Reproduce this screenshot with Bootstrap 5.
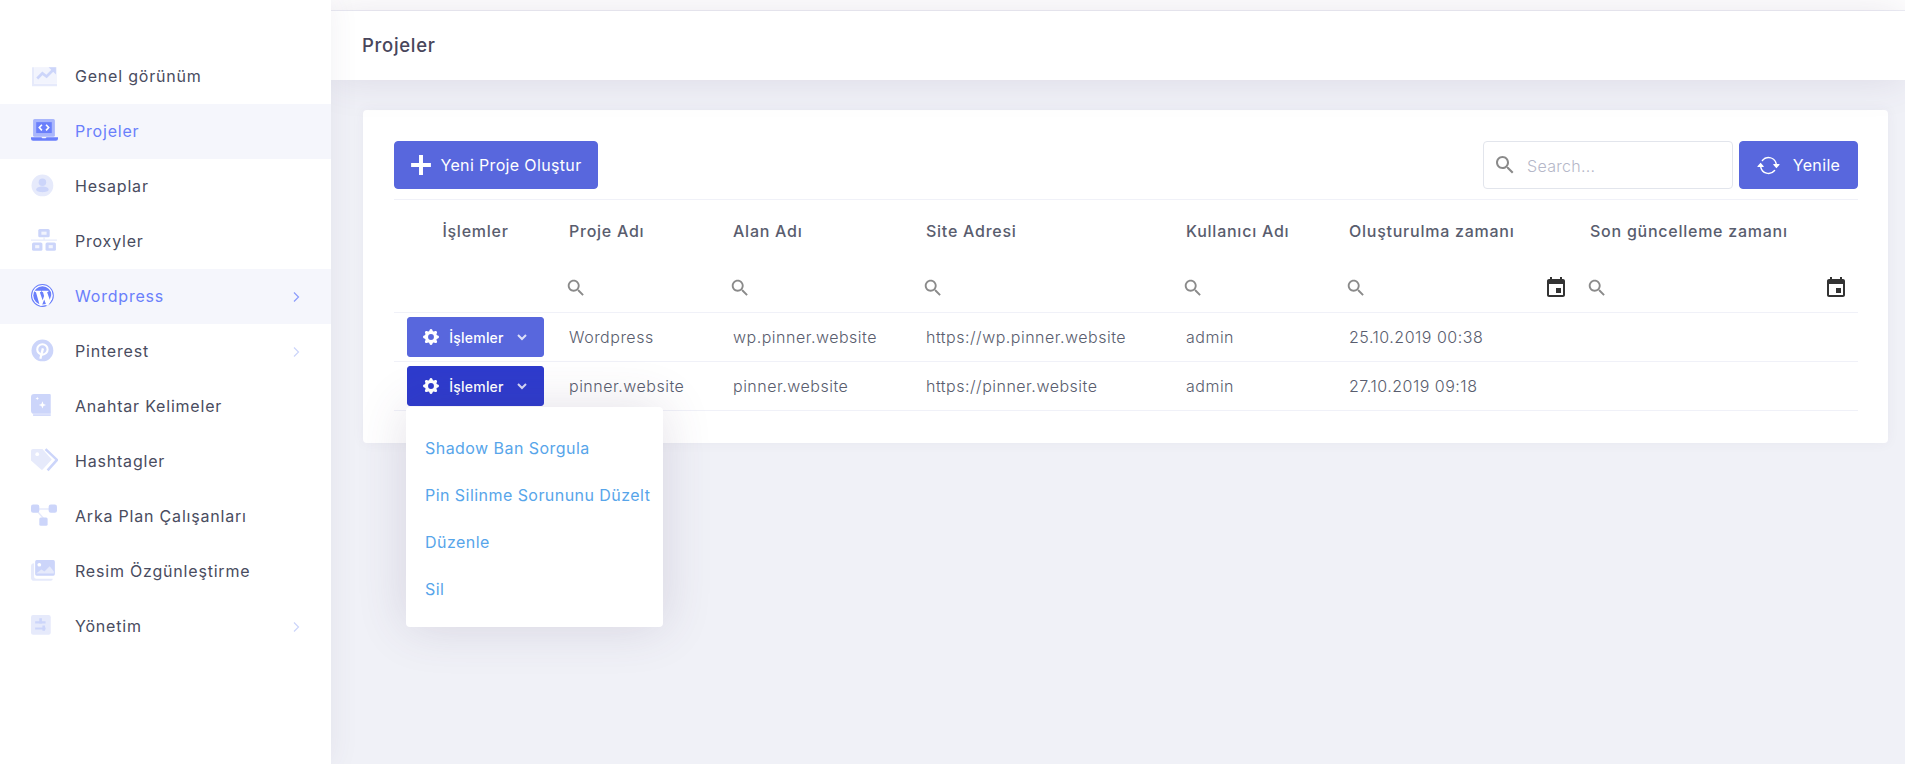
<!DOCTYPE html>
<html lang="tr">
<head>
    <meta charset="UTF-8">
    <meta name="viewport" content="width=device-width, initial-scale=1.0">
    <title>Projeler</title>
    <link href="https://cdn.jsdelivr.net/npm/bootstrap@5.3.0/dist/css/bootstrap.min.css" rel="stylesheet">
    <style>
        body {
            font-family: "Inter", "Noto Sans", sans-serif;
            font-size: 16px;
            letter-spacing: .5px;
            color: #494c60;
            background: #f0f1f7;
            height: 764px;
            overflow: hidden;
        }
        .page-wrap { height: 764px; }

        /* sidebar */
        .side-bar {
            width: 331px;
            flex: 0 0 331px;
            background: #fff;
            padding-top: 49px;
            box-shadow: 0 0 28px rgba(82, 63, 105, .08);
            position: relative;
            z-index: 3;
        }
        .side-item {
            height: 55px;
            padding: 0 31px;
            color: #494c60;
            text-decoration: none;
            font-size: 16px;
            letter-spacing: .8px;
        }
        .side-item span { padding-bottom: 2px; }
        .side-item svg.side-icon { width: 27px; height: 27px; flex: none; margin-right: 17px; }
        .side-item.is-open { background: #f5f6fc; color: #6a7ffb; }
        .side-arrow { margin-left: auto; width: 8px; height: 12px; flex: none; }

        /* top header */
        .top-strip { height: 11px; background: #fff; border-bottom: 1px solid #eeeff6; }
        .top-head {
            height: 69px;
            background: #fff;
            padding-left: 31px;
            font-size: 18.5px;
            letter-spacing: .7px;
            font-weight: 500;
            color: #48465b;
            box-shadow: 0 0 40px rgba(82, 63, 105, .13);
            position: relative;
            z-index: 2;
        }

        /* content card */
        .page-body { padding: 30px 17px 0 32px; }
        .main-card {
            border: 0;
            border-radius: 4px;
            padding: 31px 30px 32px 31px;
            box-shadow: 0 0 13px rgba(82, 63, 105, .05);
        }
        .tool-row { height: 48px; margin-bottom: 10px; }
        .act-btn {
            --bs-btn-bg: #5867dd;
            --bs-btn-border-color: #5867dd;
            --bs-btn-hover-bg: #5867dd;
            --bs-btn-hover-border-color: #5867dd;
            --bs-btn-font-size: 16px;
            letter-spacing: .35px;
            height: 48px;
            border-radius: 4px;
        }
        .new-btn { width: 204px; }
        .new-btn svg { width: 22px; height: 22px; margin-right: 8px; flex: none; }
        .refresh-btn { width: 119px; margin-left: 6px; }
        .refresh-btn svg { width: 23px; height: 23px; margin-right: 13px; flex: none; }
        .search-box {
            width: 250px;
            height: 48px;
            border: 1px solid #e2e5ec;
            border-radius: 4px;
            padding: 0 9px;
        }
        .search-box svg { width: 24px; height: 24px; flex: none; color: #8a8a8a; }
        .search-box input {
            border: 0;
            outline: 0;
            width: 100%;
            margin-left: 8px;
            padding-top: 2px;
            font-size: 16px;
            letter-spacing: .3px;
            font-weight: 300;
            color: #494c60;
            min-width: 0;
        }
        .search-box input::placeholder { color: #b5b7c8; }

        /* table */
        .proj-table { table-layout: fixed; margin: 0; width: 1464px; border-top: 1px solid #f0f1f8; color: #494c60; }
        .proj-table th, .proj-table td { border-color: #f0f1f8; vertical-align: middle; padding: 0 12px; white-space: nowrap; }
        .proj-table th { font-weight: 500; font-size: 16px; letter-spacing: .75px; color: #595d6e; }
        .head-row { height: 63px; }
        .head-row th { border-bottom: 0; }
        .filter-row { height: 50px; }
        .filter-row th { padding-left: 8px; padding-right: 10px; padding-top: 1px; }
        .filter-row svg { width: 22px; height: 22px; flex: none; color: #8a8a8a; }
        .filter-row svg.cal-icon { width: 24px; height: 24px; color: #333; }
        .filter-row input { border: 0; outline: 0; background: none; flex: 1 1 auto; min-width: 0; }
        .data-row { height: 49px; }
        .data-row td { font-weight: 300; color: #595d6e; font-size: 16px; letter-spacing: .5px; }
        .w-a { width: 163px; } .w-b { width: 164px; } .w-c { width: 193px; } .w-d { width: 260px; }
        .w-e { width: 163px; } .w-f { width: 241px; } .w-g { width: 280px; }

        .proj-table td.act-cell { position: relative; padding-left: 13px; }
        .row-btn {
            --bs-btn-bg: #5867dd;
            --bs-btn-border-color: #5867dd;
            --bs-btn-font-size: 14px;
            --bs-btn-padding-x: 0;
            --bs-btn-padding-y: 0;
            letter-spacing: .2px;
            width: 137px;
            height: 40px;
            border-radius: 3px;
            font-weight: 500;
        }
        .row-btn.is-on { background: #2e3bcd; border-color: #2e3bcd; }
        .row-btn .gear { width: 16px; height: 16px; margin-right: 10px; flex: none; }
        .row-btn .chev { width: 12px; height: 12px; margin-left: 12px; opacity: .8; flex: none; }

        .row-menu {
            display: block;
            top: 45px;
            left: 12px;
            width: 257px;
            height: 220px;
            padding: 17px 0 0;
            border: 0;
            border-radius: 4px;
            box-shadow: 0 0 50px rgba(82, 63, 105, .16);
        }
        .row-menu .dropdown-item {
            color: #57a5ea;
            height: 47px;
            padding: 0 19px;
            font-size: 16px;
            letter-spacing: .45px;
            display: flex;
            align-items: center;
        }
    </style>
</head>
<body>
    <div class="d-flex page-wrap">
        <nav class="side-bar" id="sideBar"></nav>

        <div class="flex-grow-1">
            <div class="top-strip"></div>
            <div class="top-head d-flex align-items-center">Projeler</div>

            <div class="page-body">
                <div class="card main-card">
                    <div class="tool-row d-flex align-items-center justify-content-between">
                        <a href="#" class="btn btn-primary act-btn new-btn d-flex align-items-center justify-content-center">
                            <svg viewBox="0 0 20 20"><path d="M8.200 1h3.600v7.200H19v3.600h-7.200V19H8.200v-7.200H1V8.200h7.200z" fill="#fff"/></svg>
                            Yeni Proje Oluştur
                        </a>
                        <div class="d-flex align-items-center">
                            <div class="search-box d-flex align-items-center">
                                <svg viewBox="0 0 24 24" fill="currentColor"><path d="M15.5 14h-.79l-.28-.27C15.41 12.59 16 11.11 16 9.5 16 5.91 13.09 3 9.5 3S3 5.91 3 9.5 5.91 16 9.5 16c1.61 0 3.09-.59 4.23-1.57l.27.28v.79l5 4.99L20.49 19l-4.99-5zm-6 0C7.01 14 5 11.99 5 9.5S7.01 5 9.5 5 14 7.01 14 9.5 11.99 14 9.5 14z"/></svg>
                                <input type="text" placeholder="Search...">
                            </div>
                            <a href="#" class="btn btn-primary act-btn refresh-btn d-flex align-items-center justify-content-center">
                                <svg viewBox="0 0 16 16" fill="#fff"><path d="M11.534 7h3.932a.25.25 0 0 1 .192.41l-1.966 2.36a.25.25 0 0 1-.384 0l-1.966-2.36a.25.25 0 0 1 .192-.41zm-11 2h3.932a.25.25 0 0 0 .192-.41L2.692 6.23a.25.25 0 0 0-.384 0L.342 8.59A.25.25 0 0 0 .534 9z"/><path d="M8 3c-1.552 0-2.94.707-3.857 1.818a.5.5 0 1 1-.771-.636A6.002 6.002 0 0 1 13.917 7H12.9A5.002 5.002 0 0 0 8 3zM3.1 9a5.002 5.002 0 0 0 8.757 2.182.5.5 0 1 1 .771.636A6.002 6.002 0 0 1 2.083 9H3.1z"/></svg>
                                Yenile
                            </a>
                        </div>
                    </div>

                    <table class="table proj-table">
                        <colgroup>
                            <col class="w-a"><col class="w-b"><col class="w-c"><col class="w-d"><col class="w-e"><col class="w-f"><col class="w-g">
                        </colgroup>
                        <thead>
                            <tr class="head-row">
                                <th class="text-center">İşlemler</th>
                                <th>Proje Adı</th>
                                <th>Alan Adı</th>
                                <th>Site Adresi</th>
                                <th>Kullanıcı Adı</th>
                                <th>Oluşturulma zamanı</th>
                                <th>Son güncelleme zamanı</th>
                            </tr>
                            <tr class="filter-row" id="filterRow"></tr>
                        </thead>
                        <tbody>
                            <tr class="data-row">
                                <td class="act-cell">
                                    <button type="button" class="btn btn-primary row-btn d-flex align-items-center justify-content-center">
                                        <svg class="gear" viewBox="0 0 16 16" fill="#fff"><path d="M9.405 1.05c-.413-1.4-2.397-1.4-2.81 0l-.1.34a1.464 1.464 0 0 1-2.105.872l-.31-.17c-1.283-.698-2.686.705-1.987 1.987l.169.311c.446.82.023 1.841-.872 2.105l-.34.1c-1.4.413-1.4 2.397 0 2.81l.34.1a1.464 1.464 0 0 1 .872 2.105l-.17.31c-.698 1.283.705 2.686 1.987 1.987l.311-.169a1.464 1.464 0 0 1 2.105.872l.1.34c.413 1.4 2.397 1.4 2.81 0l.1-.34a1.464 1.464 0 0 1 2.105-.872l.31.17c1.283.698 2.686-.705 1.987-1.987l-.169-.311a1.464 1.464 0 0 1 .872-2.105l.34-.1c1.4-.413 1.4-2.397 0-2.81l-.34-.1a1.464 1.464 0 0 1-.872-2.105l.17-.31c.698-1.283-.705-2.686-1.987-1.987l-.311.169a1.464 1.464 0 0 1-2.105-.872l-.1-.34zM8 10.93a2.929 2.929 0 1 1 0-5.86 2.929 2.929 0 0 1 0 5.858z"/></svg>
                                        İşlemler
                                        <svg class="chev" viewBox="0 0 12 12" fill="none" stroke="#fff" stroke-width="2"><path d="M2 4l4 4 4-4"/></svg>
                                    </button>
                                </td>
                                <td>Wordpress</td>
                                <td>wp.pinner.website</td>
                                <td>https://wp.pinner.website</td>
                                <td>admin</td>
                                <td>25.10.2019 00:38</td>
                                <td></td>
                            </tr>
                            <tr class="data-row">
                                <td class="act-cell">
                                    <button type="button" class="btn btn-primary row-btn is-on d-flex align-items-center justify-content-center">
                                        <svg class="gear" viewBox="0 0 16 16" fill="#fff"><path d="M9.405 1.05c-.413-1.4-2.397-1.4-2.81 0l-.1.34a1.464 1.464 0 0 1-2.105.872l-.31-.17c-1.283-.698-2.686.705-1.987 1.987l.169.311c.446.82.023 1.841-.872 2.105l-.34.1c-1.4.413-1.4 2.397 0 2.81l.34.1a1.464 1.464 0 0 1 .872 2.105l-.17.31c-.698 1.283.705 2.686 1.987 1.987l.311-.169a1.464 1.464 0 0 1 2.105.872l.1.34c.413 1.4 2.397 1.4 2.81 0l.1-.34a1.464 1.464 0 0 1 2.105-.872l.31.17c1.283.698 2.686-.705 1.987-1.987l-.169-.311a1.464 1.464 0 0 1 .872-2.105l.34-.1c1.4-.413 1.4-2.397 0-2.81l-.34-.1a1.464 1.464 0 0 1-.872-2.105l.17-.31c.698-1.283-.705-2.686-1.987-1.987l-.311.169a1.464 1.464 0 0 1-2.105-.872l-.1-.34zM8 10.93a2.929 2.929 0 1 1 0-5.86 2.929 2.929 0 0 1 0 5.858z"/></svg>
                                        İşlemler
                                        <svg class="chev" viewBox="0 0 12 12" fill="none" stroke="#fff" stroke-width="2"><path d="M2 4l4 4 4-4"/></svg>
                                    </button>
                                    <ul class="dropdown-menu row-menu">
                                        <li><a class="dropdown-item" href="#">Shadow Ban Sorgula</a></li>
                                        <li><a class="dropdown-item" href="#">Pin Silinme Sorununu Düzelt</a></li>
                                        <li><a class="dropdown-item" href="#">Düzenle</a></li>
                                        <li><a class="dropdown-item" href="#">Sil</a></li>
                                    </ul>
                                </td>
                                <td>pinner.website</td>
                                <td>pinner.website</td>
                                <td>https://pinner.website</td>
                                <td>admin</td>
                                <td>27.10.2019 09:18</td>
                                <td></td>
                            </tr>
                        </tbody>
                    </table>
                </div>
            </div>
        </div>
    </div>

    <script src="https://cdn.jsdelivr.net/npm/bootstrap@5.3.0/dist/js/bootstrap.bundle.min.js"></script>
    <script>
        // sidebar entries, icons are drawn in a 27x27 box
        const L = '#e6eafb', M = '#ccd5fa', B = '#6a7ffb';
        const menu = [
            { name: 'Genel görünüm', icon: `<path d="M2 5h2v16h22v2.500H2z" fill="${L}"/><path d="M4 5h22v16H4z" fill="#f2f4fd"/><path d="M7 16l5-5 4 3 6-6" fill="none" stroke="${M}" stroke-width="2.600"/><path d="M18 5h7v7z" fill="${M}"/>` },
            { name: 'Projeler', open: true, icon: `<rect x="3" y="2" width="21" height="17" rx="1.500" fill="#a9b6fc"/><rect x="6" y="5" width="15" height="10.500" fill="${B}"/><path d="M11.500 7.500L9 10.200l2.500 2.700M15.500 7.500L18 10.200l-2.500 2.700" fill="none" stroke="#fff" stroke-width="1.600"/><path d="M1 19.500h10l1 1h3l1-1h11v1.500a2 2 0 0 1-2 2H3a2 2 0 0 1-2-2z" fill="${B}"/>` },
            { name: 'Hesaplar', icon: `<circle cx="12" cy="13" r="10.500" fill="${L}"/><circle cx="12" cy="10" r="3.600" fill="${M}"/><path d="M6 17c0-2 3-3 6-3s6 1 6 3-3 2.500-6 2.500-6-.5-6-2.500z" fill="${M}"/>` },
            { name: 'Proxyler', icon: `<rect x="8" y="2" width="11" height="8" rx="1.500" fill="${M}"/><rect x="11" y="4.500" width="5" height="3" fill="#f2f4fd"/><path d="M1 12h25v1.200H1zM13 10h1.200v3H13z" fill="${L}"/><rect x="2" y="15" width="10" height="8" rx="1.500" fill="${M}"/><rect x="5" y="17.500" width="4" height="3" fill="#f2f4fd"/><rect x="15" y="15" width="10" height="8" rx="1.500" fill="${M}"/><rect x="18" y="17.500" width="4" height="3" fill="#f2f4fd"/>` },
            { name: 'Wordpress', open: true, arrow: true, icon: `<circle cx="12" cy="13" r="10.500" fill="#fff" stroke="${B}" stroke-width="1"/><circle cx="12" cy="13" r="8.800" fill="${B}"/><path d="M4.500 8.500h6.500v1l-1.500.3 2.700 7.700 1.400-4-1-3.700-1-.3v-1h6.200v1l-1.300.3 2.600 7.400 2-6.500-.2 6-3.400 6.300h-1.500l-2.300-6.200-2.300 6.200H9.500L5.800 9.800l-1.300-.3z" fill="#fff"/>` },
            { name: 'Pinterest', arrow: true, icon: `<circle cx="12" cy="13" r="10.500" fill="${M}"/><circle cx="12" cy="12" r="5" fill="none" stroke="#fff" stroke-width="2"/><path d="M12.500 11l-2.500 10" stroke="#fff" stroke-width="2.200" fill="none"/>` },
            { name: 'Anahtar Kelimeler', icon: `<path d="M4 2h15a1 1 0 0 1 1 1v18H4a3 3 0 0 1-3-3V5a3 3 0 0 1 3-3z" fill="${M}"/><path d="M3 21.500h17V23H3z" fill="${M}"/><path d="M12 9l1 2.500 2.500 1-2.500 1-1 2.500-1-2.500-2.500-1 2.500-1zM7 4.500l.5 1.300 1.300.5-1.300.5-.5 1.300-.5-1.300-1.300-.5 1.300-.5z" fill="#fff"/>` },
            { name: 'Hashtagler', icon: `<path d="M3 2h9l9 10-9 10h-1L1 13V4a2 2 0 0 1 2-2z" fill="${L}"/><circle cx="7" cy="7" r="1.800" fill="#fff"/><path d="M15 2l11 10.500-9 10" fill="none" stroke="${M}" stroke-width="2.400"/>` },
            { name: 'Arka Plan Çalışanları', icon: `<path d="M8 6h11v1.500H8zM8 9l7 8-1 1-7-8z" fill="${L}"/><rect x="1" y="2.500" width="8" height="8" rx="2" fill="${M}"/><rect x="18" y="2.500" width="8" height="8" rx="2" fill="${M}"/><rect x="9" y="15" width="8" height="8" rx="1.500" fill="${M}"/>` },
            { name: 'Resim Özgünleştirme', icon: `<path d="M1 9a3 3 0 0 1 3-3v13a2 2 0 0 0 2 2h16a2 2 0 0 1-2 2H4a3 3 0 0 1-3-3z" fill="${L}"/><rect x="5" y="3" width="19" height="15" rx="1.500" fill="${M}"/><circle cx="9" cy="7.500" r="1.800" fill="#fff"/><path d="M6 16l5-4 3 2 5-5 4 5v2H6z" fill="#e6eafb"/>` },
            { name: 'Yönetim', arrow: true, icon: `<rect x="1" y="3" width="19" height="19" rx="2" fill="${L}"/><path d="M5 9h10v2H5zM5 15h10v2H5z" fill="${M}"/><path d="M9 6h2.500v5H9zM12 13h2.500v5H12z" fill="${M}"/>` }
        ];

        const sideBar = document.getElementById('sideBar');
        menu.forEach((item) => {
            const link = document.createElement('a');
            link.href = '#';
            link.className = 'side-item d-flex align-items-center' + (item.open ? ' is-open' : '');
            const stroke = item.open ? '#8b9bfb' : '#ccd5fa';
            link.innerHTML = `<svg class="side-icon" viewBox="1 1 26 26">${item.icon}</svg><span>${item.name}</span>` +
                (item.arrow ? `<svg class="side-arrow" viewBox="0 0 8 12" fill="none" stroke="${stroke}" stroke-width="1.200"><path d="M2 1.500L6.500 6 2 10.500"/></svg>` : '');
            sideBar.appendChild(link);
        });

        // filter cells under the table header
        const searchSvg = '<svg viewBox="0 0 24 24" fill="currentColor"><path d="M15.5 14h-.79l-.28-.27C15.41 12.59 16 11.11 16 9.5 16 5.91 13.09 3 9.5 3S3 5.91 3 9.5 5.91 16 9.5 16c1.61 0 3.09-.59 4.23-1.57l.27.28v.79l5 4.99L20.49 19l-4.99-5zm-6 0C7.01 14 5 11.99 5 9.5S7.01 5 9.5 5 14 7.01 14 9.5 11.99 14 9.5 14z"/></svg>';
        const calSvg = '<svg class="cal-icon" viewBox="0 0 24 24" fill="currentColor"><path d="M17 12h-5v5h5v-5zM16 1v2H8V1H6v2H5c-1.110 0-1.990.9-1.990 2L3 19c0 1.100.89 2 2 2h14c1.100 0 2-.9 2-2V5c0-1.100-.9-2-2-2h-1V1h-2zm3 18H5V8h14v11z"/></svg>';
        const filterRow = document.getElementById('filterRow');
        filterRow.appendChild(document.createElement('th'));
        [false, false, false, false, true, true].forEach((hasDate) => {
            const th = document.createElement('th');
            th.innerHTML = `<div class="d-flex align-items-center">${searchSvg}<input type="text" aria-label="Filtre">${hasDate ? calSvg : ''}</div>`;
            filterRow.appendChild(th);
        });
    </script>
</body>
</html>
